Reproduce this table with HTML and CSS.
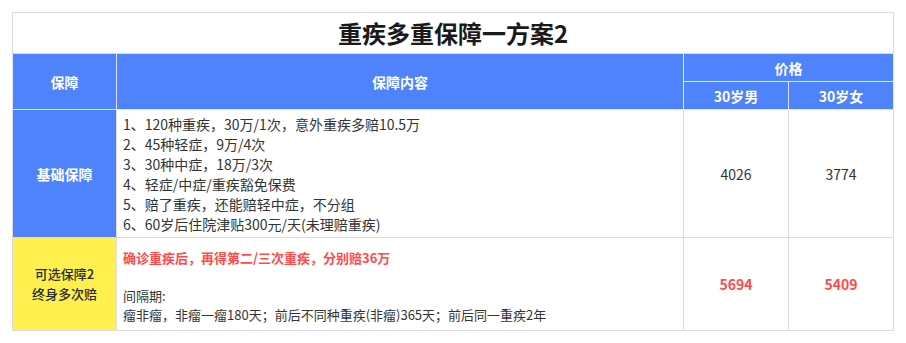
FILE: index.html
```html
<!DOCTYPE html>
<html lang="zh">
<head>
<meta charset="utf-8">
<link rel="stylesheet" href="styles.css">
</head>
<body>
<table class="plan">
  <colgroup>
    <col class="c-name">
    <col class="c-content">
    <col class="c-price">
    <col class="c-price">
  </colgroup>
  <tr class="title-row">
    <td colspan="4" class="title">重疾多重保障一方案2</td>
  </tr>
  <tr class="head-a">
    <th rowspan="2">保障</th>
    <th rowspan="2">保障内容</th>
    <th colspan="2">价格</th>
  </tr>
  <tr class="head-b">
    <th>30岁男</th>
    <th>30岁女</th>
  </tr>
  <tr class="row-basic">
    <td class="label blue">基础保障</td>
    <td class="content">
      <div>1、120种重疾，30万/1次，意外重疾多赔10.5万</div>
      <div>2、45种轻症，9万/4次</div>
      <div>3、30种中症，18万/3次</div>
      <div>4、轻症/中症/重疾豁免保费</div>
      <div>5、赔了重疾，还能赔轻中症，不分组</div>
      <div>6、60岁后住院津贴300元/天(未理赔重疾)</div>
    </td>
    <td class="price">4026</td>
    <td class="price">3774</td>
  </tr>
  <tr class="row-opt">
    <td class="label yellow">可选保障2<br>终身多次赔</td>
    <td class="content small">
      <div class="red">确诊重疾后，再得第二/三次重疾，分别赔36万</div>
      <div class="blank">&nbsp;</div>
      <div>间隔期:</div>
      <div>瘤非瘤，非瘤一瘤180天；前后不同种重疾(非瘤)365天；前后同一重疾2年</div>
    </td>
    <td class="price red-num">5694</td>
    <td class="price red-num">5409</td>
  </tr>
</table>
</body>
</html>
```

FILE: styles.css
```css
html, body {
  margin: 0;
  padding: 0;
  background: #ffffff;
}
body {
  padding: 12px;
  font-family: "Noto Sans CJK SC", "Noto Sans", sans-serif;
  color: #333333;
}
.plan {
  border-collapse: collapse;
  table-layout: fixed;
  width: 882px;
}
.c-name { width: 104px; }
.c-content { width: 567px; }
.c-price { width: 105px; }
.plan td, .plan th {
  border: 1px solid #dcdcdc;
  padding: 0;
}
.title-row { height: 41px; }
.title-row td {
  text-align: center;
  font-size: 24px;
  font-weight: 700;
  color: #1a1a1a;
  line-height: 30px;
}
.plan th {
  background: #4f83fc;
  color: #ffffff;
  font-size: 14px;
  font-weight: 700;
  border-color: #dfe6f7;
  text-align: center;
  line-height: 20px;
}
.head-a, .head-b { height: 28px; }
.label {
  text-align: center;
  font-size: 14px;
}
.blue {
  background: #4f83fc;
  color: #ffffff;
  font-weight: 700;
}
.yellow {
  background: #fff050;
  color: #2a2a2a;
  font-size: 13px;
  font-weight: 500;
  line-height: 20px;
  border-color: #e6d84a;
}
.row-basic { height: 128px; }
.row-opt { height: 93px; }
.content {
  padding: 0 0 0 6px !important;
  font-size: 14px;
  line-height: 20px;
  vertical-align: middle;
  color: #333333;
}
.content.small {
  font-size: 13px;
  line-height: 19px;
  padding: 3px 0 0 6px !important;
}
.red {
  color: #ff4b4b;
  font-weight: 700;
}
.price {
  text-align: center;
  font-size: 14px;
  color: #333333;
}
.red-num {
  color: #ff4b4b;
  font-weight: 700;
}
```
